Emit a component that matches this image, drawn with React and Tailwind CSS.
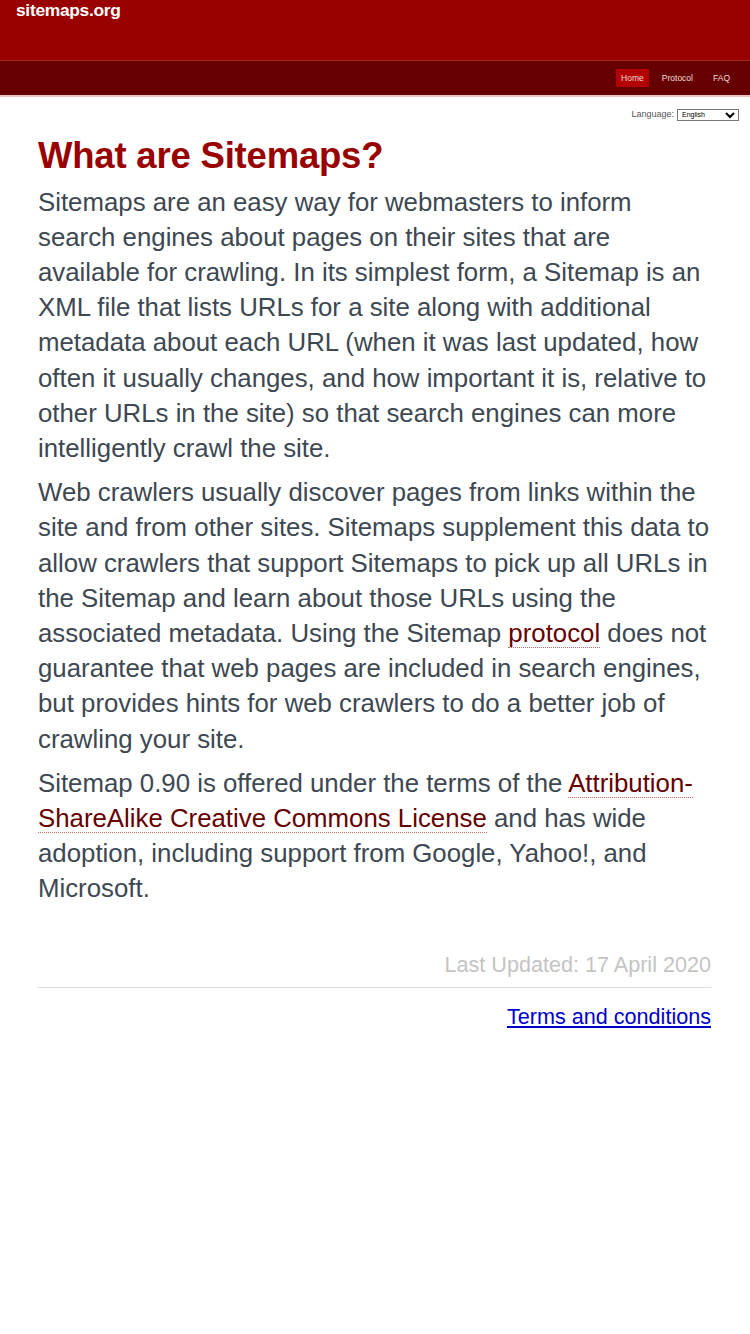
export default function App() {
  const link = "text-[#660000] border-b border-dotted border-[#cc6666] no-underline";
  return (
    <div className="min-h-[1334px] bg-white font-['Liberation_Sans',Arial,sans-serif]">
      <header>
        <div className="h-[61px] bg-[#990000] px-[16px] border-b border-[#aa2222]">
          <a href="#" className="block text-[17.4px] font-bold leading-[20px] text-white tracking-[-0.3px]">
            sitemaps.org
          </a>
        </div>
        <nav className="flex h-[36px] items-center justify-end bg-[#660000] pr-[20px] border-b-2 border-[#e8c4c4]">
          <a href="#" className="rounded-[1px] bg-[#b30000] px-[5px] py-[4px] text-[8.5px] leading-[10px] text-[#f5dcdc]">
            Home
          </a>
          <a href="#" className="ml-[13px] text-[8.5px] leading-[10px] text-[#f5dcdc]">
            Protocol
          </a>
          <a href="#" className="ml-[20px] text-[8.5px] leading-[10px] text-[#f5dcdc]">
            FAQ
          </a>
        </nav>
      </header>

      <main className="px-[38px] pr-[39px]">
        <div className="-mr-[28px] mt-[11px] flex items-center justify-end gap-[3px] text-[9px] text-[#555]">
          <span>Language:</span>
          <select className="h-[12px] w-[62px] border border-[#777] text-[7px] leading-[10px] text-black" defaultValue="en">
            <option value="en">English</option>
          </select>
        </div>

        <h1 className="mt-[12px] text-[36.5px] font-bold leading-[44px] text-[#990000] tracking-[-0.2px]">
          What are Sitemaps?
        </h1>

        <div className="text-[25.8px] leading-[35.2px] text-[#3d4852]">
          <p className="mt-[7px]">
            Sitemaps are an easy way for webmasters to inform search engines about pages on their sites that are
            available for crawling. In its simplest form, a Sitemap is an XML file that lists URLs for a site along
            with additional metadata about each URL (when it was last updated, how often it usually changes, and how
            important it is, relative to other URLs in the site) so that search engines can more intelligently crawl
            the site.
          </p>
          <p className="mt-[9px]">
            Web crawlers usually discover pages from links within the site and from other sites. Sitemaps supplement
            this data to allow crawlers that support Sitemaps to pick up all URLs in the Sitemap and learn about those
            URLs using the associated metadata. Using the Sitemap{" "}
            <a href="#" className={link}>protocol</a> does not guarantee that web pages are included in search
            engines, but provides hints for web crawlers to do a better job of crawling your site.
          </p>
          <p className="mt-[9px]">
            Sitemap 0.90 is offered under the terms of the{" "}
            <a href="#" className={link}>Attribution-ShareAlike Creative Commons License</a> and has wide adoption,
            including support from Google, Yahoo!, and Microsoft.
          </p>
        </div>

        <footer className="mt-[44px]">
          <p className="pb-[8px] text-right text-[21.6px] leading-[28px] text-[#c4c4c4]">Last Updated: 17 April 2020</p>
          <div className="border-t border-[#dddddd]" />
          <p className="mt-[15px] text-right text-[21.6px] leading-[28px]">
            <a href="#" className="text-[#0000cc] underline">Terms and conditions</a>
          </p>
        </footer>
      </main>
    </div>
  );
}
